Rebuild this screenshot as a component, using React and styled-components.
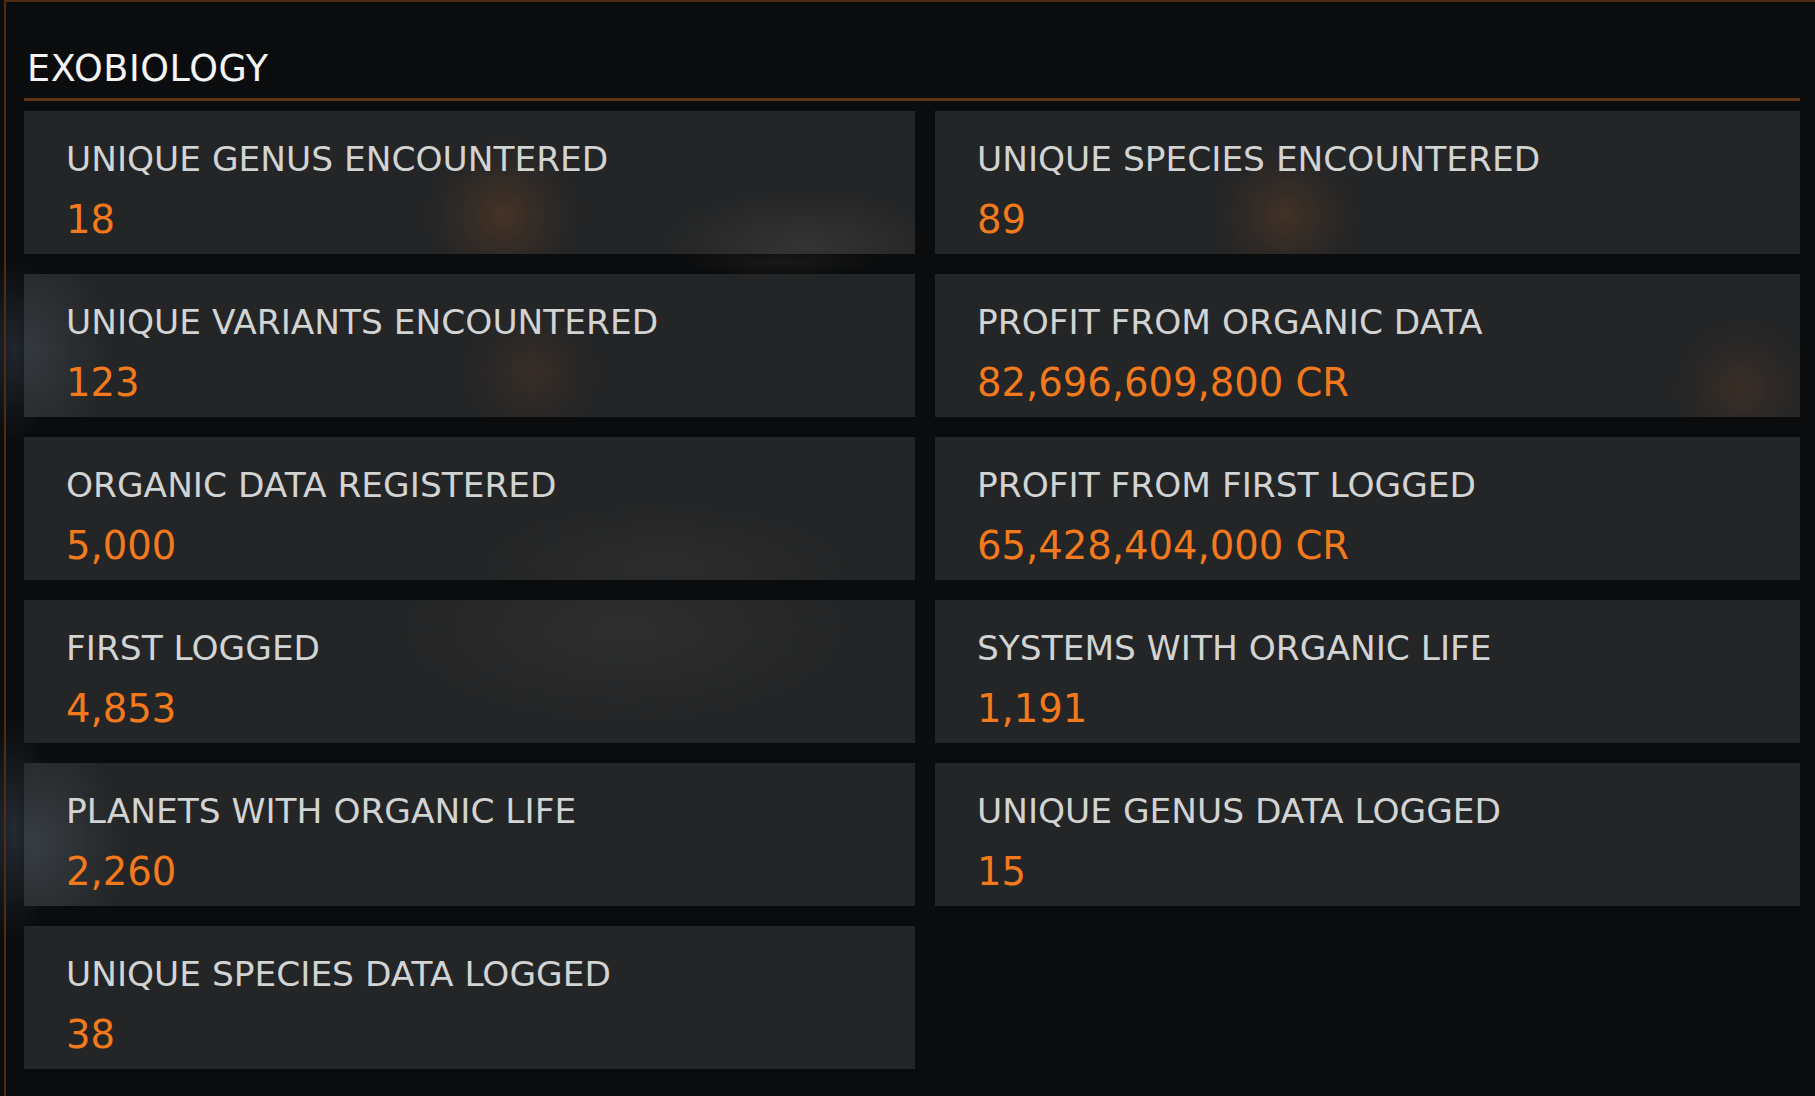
import React from "react";
import styled, { createGlobalStyle } from "styled-components";

const GlobalStyle = createGlobalStyle`
  html, body {
    margin: 0;
    padding: 0;
    background: #0b0c0d;
  }
  body {
    font-family: "DejaVu Sans", "Liberation Sans", sans-serif;
  }
`;

const Page = styled.div`
  width: 1815px;
  height: 1096px;
  overflow: hidden;
  box-sizing: border-box;
  padding-left: 4px;
  background:
    radial-gradient(ellipse 40px 90px at 14px 350px, rgba(80, 100, 120, 0.3) 0, rgba(80, 100, 120, 0) 100%),
    radial-gradient(ellipse 40px 110px at 14px 830px, rgba(80, 100, 120, 0.35) 0, rgba(80, 100, 120, 0) 100%),
    radial-gradient(ellipse 100px 16px at 780px 262px, rgba(120, 120, 120, 0.12) 0, rgba(120, 120, 120, 0) 100%),
    #0b0c0d;
`;

const Frame = styled.section`
  height: 100%;
  box-sizing: border-box;
  border-left: 2px solid #4d2d16;
  border-top: 2px solid #4d2d16;
  padding: 49px 15px 0 18px;
`;

const Title = styled.h1`
  margin: 0;
  padding-left: 3px;
  font-size: 36.5px;
  line-height: 36px;
  letter-spacing: 0.6px;
  font-weight: normal;
  color: #f4f4f4;
`;

const Rule = styled.div`
  margin-top: 11px;
  height: 3px;
  background: #5c3518;
`;

const Grid = styled.div`
  margin-top: 10px;
  display: grid;
  grid-template-columns: 891px 865px;
  grid-auto-rows: 143px;
  column-gap: 20px;
  row-gap: 20px;
`;

const Card = styled.div`
  box-sizing: border-box;
  padding: 31px 0 0 42px;
  background: ${(p) => (p.$glow ? `${p.$glow}, ` : "")}#242526;
  display: flex;
  flex-direction: column;
`;

const Label = styled.div`
  font-size: 34.4px;
  line-height: 34.4px;
  color: #d2d3d3;
  white-space: nowrap;
`;

const Value = styled.div`
  margin-top: 25px;
  font-size: 38.5px;
  line-height: 38.5px;
  color: #f37a1c;
  white-space: nowrap;
`;

const orange = (x, y, r, a) =>
  `radial-gradient(circle at ${x}px ${y}px, rgba(105, 65, 38, ${a}) 0, rgba(105, 65, 38, ${a * 0.4}) ${r * 0.5}px, rgba(105, 65, 38, 0) ${r}px)`;
const haze = (x, y, rx, ry, a, c = "110, 110, 110") =>
  `radial-gradient(ellipse ${rx}px ${ry}px at ${x}px ${y}px, rgba(${c}, ${a}) 0, rgba(${c}, 0) 100%)`;

const stats = [
  ["UNIQUE GENUS ENCOUNTERED", "18", [orange(479, 104, 75, 0.5), haze(780, 135, 140, 55, 0.2)].join(", ")],
  ["UNIQUE SPECIES ENCOUNTERED", "89", orange(350, 104, 70, 0.45)],
  ["UNIQUE VARIANTS ENCOUNTERED", "123", [orange(508, 98, 65, 0.3), haze(4, 76, 80, 110, 0.32, "85, 100, 115")].join(", ")],
  ["PROFIT FROM ORGANIC DATA", "82,696,609,800 CR", orange(807, 114, 65, 0.32)],
  ["ORGANIC DATA REGISTERED", "5,000", haze(640, 130, 180, 60, 0.1)],
  ["PROFIT FROM FIRST LOGGED", "65,428,404,000 CR"],
  ["FIRST LOGGED", "4,853", haze(600, 30, 220, 90, 0.12)],
  ["SYSTEMS WITH ORGANIC LIFE", "1,191"],
  ["PLANETS WITH ORGANIC LIFE", "2,260", haze(10, 80, 90, 110, 0.38, "85, 100, 115")],
  ["UNIQUE GENUS DATA LOGGED", "15"],
  ["UNIQUE SPECIES DATA LOGGED", "38"],
];

function StatCard({ label, value, glow }) {
  return (
    <Card $glow={glow}>
      <Label>{label}</Label>
      <Value>{value}</Value>
    </Card>
  );
}

function App() {
  return (
    <Page>
      <GlobalStyle />
      <Frame>
        <Title>EXOBIOLOGY</Title>
        <Rule />
        <Grid>
          {stats.map(([label, value, glow]) => (
            <StatCard key={label} label={label} value={value} glow={glow} />
          ))}
        </Grid>
      </Frame>
    </Page>
  );
}

export default App;
